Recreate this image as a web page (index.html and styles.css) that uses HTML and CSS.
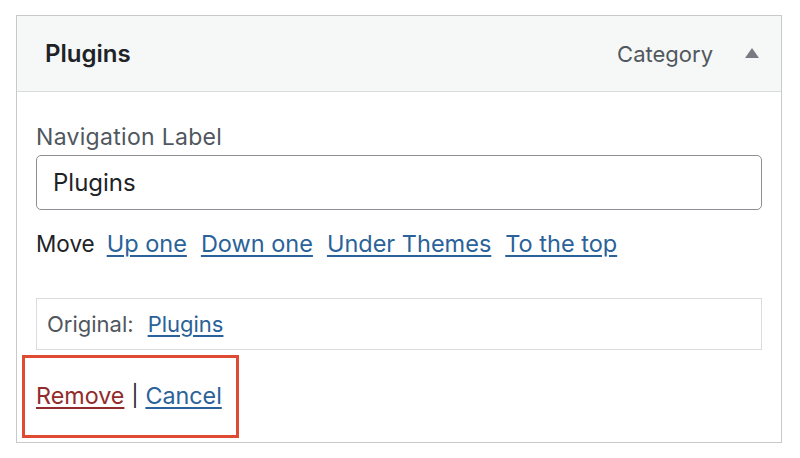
FILE: index.html
```html
<!DOCTYPE html>
<html lang="en">
<head>
  <meta charset="UTF-8" />
  <title>Menu item - Plugins</title>
  <link rel="stylesheet" href="styles.css">
</head>
<body>
  <div class="menu-item">
    <div class="item-bar">
      <span class="item-title">Plugins</span>
      <span class="item-type">Category</span>
      <span class="item-toggle"></span>
    </div>

    <div class="item-settings">
      <label class="field-label" for="navLabel">Navigation Label</label>
      <input type="text" id="navLabel" class="field-input" value="Plugins" />

      <div class="move-row">
        <span class="move-text">Move</span>
        <a href="#">Up one</a>
        <a href="#">Down one</a>
        <a href="#">Under Themes</a>
        <a href="#">To the top</a>
      </div>

      <div class="original">
        Original: <a href="#">Plugins</a>
      </div>

      <div class="actions">
        <a href="#" class="remove">Remove</a>
        <span class="sep">|</span>
        <a href="#">Cancel</a>
      </div>
    </div>
  </div>
</body>
</html>
```

FILE: styles.css
```css
body {
  margin: 0;
  background: #fff;
  font-family: Inter, "Liberation Sans", sans-serif;
  color: #1d2327;
}
a {
  color: #2a6299;
  text-decoration: underline;
  text-underline-offset: 3px;
}
.menu-item {
  margin: 15px 0 0 16px;
  width: 766px;
  height: 428px;
  box-sizing: border-box;
  border: 1px solid #c8c9cc;
}
.item-bar {
  display: flex;
  align-items: center;
  height: 75px;
  padding: 0 22px 0 28px;
  background: #f6f7f7;
  border-bottom: 1px solid #dcdcde;
}
.item-title {
  font-size: 24px;
  font-weight: 600;
  flex: 1;
}
.item-type {
  font-size: 22px;
  color: #50575e;
  margin-right: 32px;
}
.item-toggle {
  width: 0;
  height: 0;
  border-left: 7px solid transparent;
  border-right: 7px solid transparent;
  border-bottom: 10px solid #787c82;
  margin-top: -2px;
}
.item-settings {
  padding: 31px 19px 0;
}
.field-label {
  display: block;
  font-size: 23px;
  letter-spacing: 0.3px;
  line-height: 28px;
  color: #50575e;
}
.field-input {
  display: block;
  width: 100%;
  height: 55px;
  margin-top: 4px;
  box-sizing: border-box;
  border: 1.5px solid #8c8f94;
  border-radius: 5px;
  padding: 0 16px;
  font-family: inherit;
  font-size: 24px;
  color: #1d2327;
}
.move-row {
  display: flex;
  gap: 14px;
  margin-top: 20px;
  font-size: 23.5px;
  line-height: 28px;
}
.move-text {
  font-size: 22.5px;
  margin-right: -2px;
}
.original {
  margin-top: 40px;
  height: 52px;
  box-sizing: border-box;
  display: flex;
  align-items: center;
  gap: 14px;
  padding-left: 10px;
  border: 1px solid #dcdcde;
  font-size: 22px;
  color: #50575e;
}
.actions {
  margin: 5px 0 0 -14px;
  width: 217px;
  height: 83px;
  box-sizing: border-box;
  border: 3px solid #df4a32;
  padding: 0 0 3px 11px;
  display: flex;
  align-items: center;
  gap: 7px;
  font-size: 23.3px;
}
.actions .remove {
  color: #922b2c;
}
.sep {
  font-size: 21px;
  color: #1d2327;
}
```
